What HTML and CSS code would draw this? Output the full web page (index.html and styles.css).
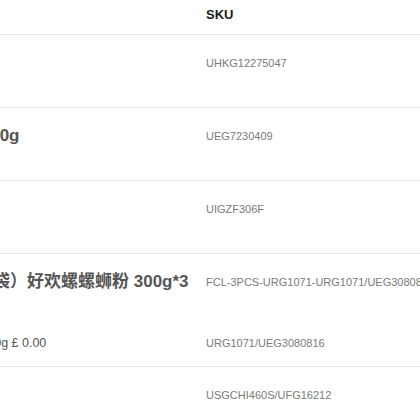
FILE: index.html
```html
<!DOCTYPE html>
<html lang="zh">
<head>
<meta charset="utf-8">
<title>SKU</title>
<link rel="stylesheet" href="styles.css">
</head>
<body>
<div class="viewport">
  <div class="table">
    <div class="row head">
      <div class="cell">商品</div>
      <div class="cell">SKU</div>
    </div>
    <div class="row">
      <div class="cell"><div class="prod"><div class="title">好欢螺</div></div></div>
      <div class="cell sku">UHKG12275047</div>
    </div>
    <div class="row">
      <div class="cell"><div class="prod"><div class="title">好欢螺螺蛳粉原味 300g</div></div></div>
      <div class="cell sku">UEG7230409</div>
    </div>
    <div class="row">
      <div class="cell"><div class="prod"><div class="title">螺蛳粉</div></div></div>
      <div class="cell sku">UIGZF306F</div>
    </div>
    <div class="row">
      <div class="cell">
        <div class="prod">
          <div class="title">柳州螺蛳粉组合（三袋）好欢螺螺蛳粉 300g*3</div>
          <div class="sub">柳州好欢螺螺蛳粉三袋 3*300g £ 0.00</div>
        </div>
      </div>
      <div class="cell sku">
        <div>FCL-3PCS-URG1071-URG1071/UEG3080816</div>
        <div class="sub">URG1071/UEG3080816</div>
      </div>
    </div>
    <div class="row">
      <div class="cell"><div class="prod"><div class="title">好欢螺</div></div></div>
      <div class="cell sku">USGCHI460S/UFG16212</div>
    </div>
  </div>
</div>
</body>
</html>
```

FILE: styles.css
```css
html, body {
  margin: 0;
  padding: 0;
  background: #ffffff;
}

.viewport {
  width: 420px;
  height: 420px;
  overflow: hidden;
}

.table {
  margin-left: -176px;
  width: 760px;
  font-family: "Liberation Sans", "Noto Sans CJK SC", sans-serif;
}

.row {
  display: grid;
  grid-template-columns: 366px 1fr;
  border-bottom: 1px solid #e6e6e6;
}

.cell {
  padding: 17px 16px 0;
  line-height: 22px;
  white-space: nowrap;
  overflow: hidden;
}

.head .cell {
  padding: 4px 16px 8px;
  font-size: 13px;
  font-weight: bold;
  color: #1a1a1a;
}

.prod {
  min-height: 55px;
}

.title {
  font-size: 17px;
  font-weight: bold;
  color: #555555;
}

.prod .sub {
  margin-top: 39px;
  margin-bottom: 12px;
  font-size: 12.5px;
  color: #555555;
}

.sku {
  font-size: 11px;
  color: #7a7a7a;
}

.sku .sub {
  margin-top: 39px;
}
```
